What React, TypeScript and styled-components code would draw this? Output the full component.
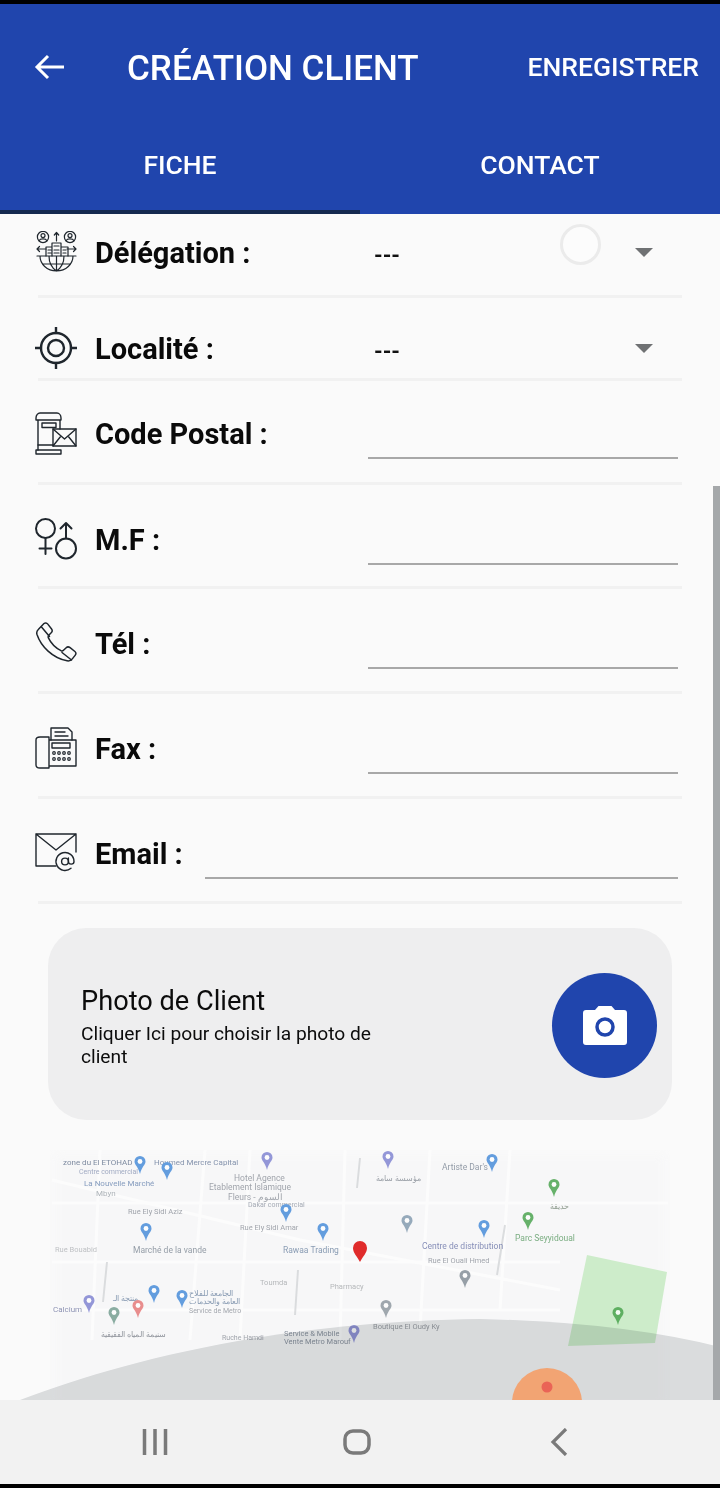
import React from "react";
import styled, { createGlobalStyle } from "styled-components";

const Global = createGlobalStyle`
  html, body { margin: 0; padding: 0; background: #fafafa; }
  body { font-family: Roboto, "Noto Sans", sans-serif; overflow: hidden; }
  #root { width: 720px; height: 1488px; }
`;

const Phone = styled.div`
  position: relative;
  width: 720px;
  height: 1488px;
  display: flex;
  flex-direction: column;
  background: #fafafa;
  overflow: hidden;
`;
const StatusStrip = styled.div`height: 4px; background: #000; flex: none;`;
const AppBar = styled.header`
  flex: none;
  height: 210px;
  background: #2045ad;
  color: #fff;
  display: flex;
  flex-direction: column;
`;
const Toolbar = styled.div`
  height: 126px;
  display: flex;
  align-items: center;
  padding: 0 21px 0 34px;
  box-sizing: border-box;
`;
const BackBtn = styled.div`width: 93px; display: flex; align-items: center;`;
const Title = styled.h1`
  margin: 0;
  padding-top: 3px;
  flex: 1;
  font: 500 35px/40px Roboto, sans-serif;
`;
const SaveBtn = styled.div`font: 500 26.5px/32px Roboto, sans-serif;`;
const Tabs = styled.div`flex: 1; display: flex;`;
const Tab = styled.div<{ $active?: boolean }>`
  flex: 1;
  display: flex;
  align-items: center;
  justify-content: center;
  padding-bottom: 10px;
  box-sizing: border-box;
  font: 500 26.5px/32px Roboto, sans-serif;
  border-bottom: 4px solid ${(p) => (p.$active ? "#14294f" : "transparent")};
`;
const Form = styled.main`flex: none; display: flex; flex-direction: column;`;
const Row = styled.div<{ $h: number; $top: number }>`
  position: relative;
  height: ${(p) => p.$h}px;
  padding: ${(p) => p.$top}px 42px 0 35px;
  box-sizing: border-box;
  display: flex;
  align-items: flex-start;
  &::after {
    content: "";
    position: absolute;
    left: 38px;
    right: 38px;
    bottom: 0;
    height: 3px;
    background: #f1f1f1;
  }
`;
const IconBox = styled.div`
  flex: none;
  width: 42px;
  height: 42px;
  margin-right: 18px;
  color: #1f262d;
`;
const Label = styled.div<{ $w?: number }>`
  flex: none;
  width: ${(p) => p.$w ?? 273}px;
  padding-top: 1px;
  font: 700 29px/42px Roboto, sans-serif;
  color: #0a0a0a;
`;
const Field = styled.div`
  flex: 1;
  height: 47px;
  box-sizing: border-box;
  border-bottom: 2px solid #a8a8a8;
`;
const Select = styled.div`
  flex: 1;
  display: flex;
  align-items: center;
  justify-content: space-between;
  padding: 4px 25px 0 6px;
  font: 700 22px/42px Roboto, sans-serif;
  color: #111;
`;
const Caret = styled.span`
  width: 0;
  height: 0;
  margin-top: -8px;
  border-left: 9px solid transparent;
  border-right: 9px solid transparent;
  border-top: 9px solid #6f7173;
`;
const Ripple = styled.span`
  position: absolute;
  left: 560px;
  top: 10px;
  width: 41px;
  height: 41px;
  box-sizing: border-box;
  border-radius: 50%;
  background: #fcfcfc;
  border: 3px solid #ebebeb;
`;
const Card = styled.section`
  flex: none;
  margin: 24px 48px 0;
  height: 192px;
  border-radius: 38px;
  background: #eeeeef;
  display: flex;
  align-items: center;
  justify-content: space-between;
  padding: 0 15px 0 33px;
`;
const CardText = styled.div`width: 310px; color: #0c0c0c;`;
const CardTitle = styled.div`font: 400 27.2px/41px Roboto, sans-serif;`;
const CardSub = styled.div`font: 400 19.2px/23px Roboto, sans-serif;`;
const CameraBtn = styled.div`
  width: 105px;
  height: 105px;
  margin-top: 2px;
  border-radius: 50%;
  background: #2045ad;
  display: flex;
  align-items: center;
  justify-content: center;
  color: #fff;
`;
const MapWrap = styled.div`
  flex: none;
  margin-top: 30px;
  height: 250px;
  overflow: hidden;
`;
const MapSvg = styled.svg`display: block; width: 720px; height: 250px;`;
const Soft = styled.g`filter: blur(4px);`;
const Haze = styled.g`filter: blur(0.5px); opacity: 0.8;`;
const Park = styled.path`filter: blur(0.6px);`;
const Shade = styled.path`mix-blend-mode: multiply;`;
const NavRow = styled.nav`
  flex: none;
  height: 84px;
  background: #f2f2f2;
  display: flex;
  align-items: center;
  padding-left: 141px;
  color: #7a7a7a;
`;
const NavSlot = styled.span<{ $w: number }>`
  display: flex;
  width: ${(p) => p.$w}px;
`;
const BottomStrip = styled.div`height: 4px; background: #000; flex: none;`;
const ScrollThumb = styled.div`
  position: absolute;
  right: 0;
  top: 486px;
  width: 7px;
  height: 914px;
  background: #a5a8aa;
`;

const stroke = { fill: "none", stroke: "currentColor", strokeWidth: 1.5, strokeLinecap: "round", strokeLinejoin: "round" } as const;

const DelegationIcon = () => (
  <svg width="42" height="42" viewBox="0 0 42 42" {...stroke} strokeWidth={1.2}>
    <circle cx="8" cy="6" r="5.6" /><circle cx="8" cy="4.6" r="2" /><path d="M4.200 9.600c1-2.400 6.600-2.400 7.600 0" />
    <circle cx="35" cy="6" r="5.600" /><circle cx="35" cy="4.600" r="2" /><path d="M31.200 9.600c1-2.400 6.600-2.400 7.600 0" />
    <path d="M21.500 10V1.500M19.300 4l2.200-2.500L23.700 4M2 18h9M2 18l2.500-2.500M2 18l2.500 2.500M41 18h-9M41 18l-2.500-2.500M41 18l-2.500 2.500" />
    <path d="M17 25V12h9v13M11 25V16h6M26 16h7v9M19 15h5M13 19h3M13 22h3M19 19h5M19 22h5M28 19h3M28 22h3" />
    <path d="M2 25h39M5 25c0 8 7 15 16.500 15S38 33 38 25M21.500 25v15M14 25c0 7 3 12 7.500 15M29 25c0 7-3 12-7.500 15M8 33h27" />
  </svg>
);
const TargetIcon = () => (
  <svg width="42" height="42" viewBox="0 0 42 42" {...stroke} strokeWidth={2.4}>
    <circle cx="21" cy="21" r="15" /><circle cx="21" cy="21" r="8" />
    <path d="M21 0v6M21 36v6M0 21h6M36 21h6" />
  </svg>
);
const PostIcon = () => (
  <svg width="42" height="44" viewBox="0 0 42 44" {...stroke} strokeWidth={1.4}>
    <path d="M1 6c0-3 2-5 4-5h17c2 0 4 2 4 5v2H1zM3 8v30M25 8v9" />
    <rect x="7" y="11" width="14" height="4.500" />
    <rect x="18" y="17" width="23" height="17" />
    <path d="M18 17l11.500 10L41 17M18 34l8-10M41 34l-8-10M3 33h15" />
    <path d="M1 38h25v4H1z" />
  </svg>
);
const GenderIcon = () => (
  <svg width="42" height="42" viewBox="0 0 42 42" {...stroke} strokeWidth={2}>
    <circle cx="10.500" cy="10.500" r="9.500" /><path d="M10.500 20v16M4.500 30.500h12" />
    <circle cx="31" cy="30.500" r="10" /><path d="M31 20.500V5M25.500 10.500L31 5l5.500 5.500" />
  </svg>
);
const PhoneIcon = () => (
  <svg width="42" height="42" viewBox="0 0 42 42" {...stroke} strokeWidth={1.5}>
    <path d="M9 1.500c1.200-1 2.700-.7 3.600.4l3.800 4.800c1 1.300 1 2.800 0 3.900l-2.600 2.700c-.7.8-.8 1.700-.4 2.600 2.700 5.600 7 10 12.600 12.800.9.4 1.800.3 2.500-.4l2.700-2.600c1.100-1 2.600-1 3.900 0l4.800 3.800c1.100.9 1.400 2.400.4 3.600l-3 3.800c-1.300 1.600-3.200 2.300-5.200 1.900C17.500 36 6 24.500 2 12.500c-.6-2-.1-3.900 1.500-5.300z" />
    <path d="M6.500 5l8 9.500M27 30.500l9.500 7.500" />
  </svg>
);
const FaxIcon = () => (
  <svg width="42" height="42" viewBox="0 0 42 42" {...stroke} strokeWidth={1.4}>
    <path d="M5 10h9v31H5c-2 0-4-1-4-3V13c0-2 2-3 4-3zM14 13h27v26H14" />
    <path d="M16 13V1h17l4 4v8M20 5h10M20 9h13" />
    <rect x="17" y="16" width="18" height="5" />
    <g strokeWidth={1.2}>
      <circle cx="19" cy="26" r="1.300" /><circle cx="24" cy="26" r="1.300" /><circle cx="29" cy="26" r="1.300" /><circle cx="34" cy="26" r="1.300" />
      <circle cx="19" cy="32" r="1.300" /><circle cx="24" cy="32" r="1.300" /><circle cx="29" cy="32" r="1.300" /><circle cx="34" cy="32" r="1.300" />
    </g>
  </svg>
);
const MailIcon = () => (
  <svg width="42" height="40" viewBox="0 0 42 40" {...stroke} strokeWidth={1.4}>
    <path d="M21 34H1V2h40v18M1 2l20 16L41 2" />
    <circle cx="30" cy="29.500" r="3.400" />
    <path d="M36 36.200A9 9 0 1 1 39 29.500c0 3.500-5.600 3.500-5.600 0V26" />
  </svg>
);

type PinData = [number, number, string];
const pins: PinData[] = [
  [140, 1168, "#3f87d8"], [167, 1174, "#3f87d8"], [267, 1164, "#7b7fd0"], [388, 1163, "#7b7fd0"], [492, 1166, "#3f87d8"],
  [554, 1191, "#43a047"], [528, 1224, "#43a047"], [286, 1216, "#3f87d8"], [323, 1235, "#3f87d8"], [146, 1235, "#3f87d8"],
  [407, 1227, "#7f97ad"], [484, 1232, "#3f87d8"], [465, 1282, "#7f8a94"], [386, 1312, "#8a949c"], [618, 1319, "#43a047"],
  [154, 1297, "#3f87d8"], [182, 1302, "#3f87d8"], [89, 1307, "#7b7fd0"], [114, 1319, "#6f9a8c"], [138, 1312, "#e57373"],
  [354, 1337, "#7b7fd0"],
];
type TextData = [number, number, string, string, number?];
const labels: TextData[] = [
  [63, 1165, "zone du El ETOHAD", "#5f6f8a", 8], [79, 1174, "Centre commercial", "#8b97b5", 7],
  [84, 1186, "La Nouvelle Marché", "#6a86b0", 8], [96, 1196, "Mbyn", "#9aa1a8", 8],
  [154, 1165, "Houmed Mercre Capital", "#687a9a", 8], [234, 1181, "Hotel Agence", "#8a8f98"],
  [209, 1190, "Etablement Islamique", "#8a8f98"], [228, 1200, "Fleurs - السوم", "#8a8f98"],
  [248, 1207, "Dakar commercial", "#8f96a3", 7], [128, 1214, "Rue Ely Sidi Aziz", "#8a8f98", 7.5],
  [240, 1230, "Rue Ely Sidi Amar", "#8a8f98", 7.5], [133, 1253, "Marché de la vande", "#7c8793"],
  [283, 1253, "Rawaa Trading", "#6f86a3"], [55, 1252, "Rue Bouabid", "#b0b3b7", 7.5],
  [422, 1249, "Centre de distribution", "#6a74a8"], [428, 1263, "Rue El Ouali Hmed", "#8a8f98", 7.5],
  [442, 1170, "Artiste Dar's", "#7a8594"], [376, 1181, "مؤسسة سامة", "#848b94", 7.5],
  [515, 1241, "Parc Seyyidoual", "#5a9a63"], [550, 1209, "حديقة", "#7a8a7a", 7.5],
  [53, 1312, "Calcium", "#7077a0", 8], [113, 1301, "منتجة الـ", "#6f86a3", 8], [189, 1296, "الجامعة للفلاح", "#6f86a3", 8],
  [189, 1304, "العامة والحدمات", "#6f86a3", 8], [189, 1313, "Service de Metro", "#8a8f98", 7],
  [101, 1337, "سنيمة المياه الفقيقية", "#7a7f88", 8], [373, 1329, "Boutique El Oudy Ky", "#858a90", 7.5],
  [284, 1336, "Service & Mobile", "#6f7a88", 7.5], [284, 1344, "Vente Metro Marouf", "#6f7a88", 7.5],
  [222, 1340, "Ruche Hamdi", "#8a8f98", 7], [260, 1285, "Toumda", "#a5a8ab", 7.5], [330, 1289, "Pharmacy", "#a5a8ab", 7.5],
];
const roads = [
  "M52 1203H668", "M52 1262H560", "M52 1310H560", "M100 1150L92 1340", "M205 1150L190 1340", "M345 1150L340 1340",
  "M430 1150L420 1330", "M510 1150L500 1310", "M52 1180L300 1240L560 1290", "M250 1150L240 1340",
];
const MapPin = ({ x, y, c }: { x: number; y: number; c: string }) => (
  <g transform={`translate(${x} ${y})`}>
    <path d="M0 6C-2-2-5.500-3-5.500-6.500a5.500 5.500 0 0 1 11 0C5.500-3 2-2 0 6z" fill={c} />
    <circle cx="0" cy="-6.500" r="2.400" fill="#fff" />
  </g>
);

const CameraGlyph = () => (
  <svg width="44" height="40" viewBox="0 0 44 40">
    <path fill="currentColor" d="M3 5h9l3.500-4h13L32 5h9a3 3 0 0 1 3 3v29a3 3 0 0 1-3 3H3a3 3 0 0 1-3-3V8a3 3 0 0 1 3-3z" />
    <circle cx="22" cy="22" r="8" fill="none" stroke="#2045ad" strokeWidth="3.500" />
  </svg>
);

const MapView = () => (
  <MapSvg viewBox="0 1150 720 250">
    <Soft><rect x="56" y="1155" width="608" height="250" fill="#f7f7f8" /></Soft>
    <g fill="none" stroke="#fcfcfc" strokeWidth="3">{roads.map((d) => <path key={d} d={d} />)}</g>
    <Park d="M587 1255L667 1272L655 1343L568 1346Z" fill="#cdecca" />
    <Haze>
      <path d="M360 1158l-3 30M107 1262l-4 40M298 1270l-3 45M505 1225l-8 50" stroke="#d4d6d8" strokeWidth="2" fill="none" />
      {labels.map(([x, y, t, c, s]) => (
        <text key={t} x={x} y={y} fill={c} fontSize={s ?? 8.5} fontFamily="Roboto, 'Noto Sans', sans-serif">{t}</text>
      ))}
      {pins.map(([x, y, c]) => <MapPin key={`${x}-${y}`} x={x} y={y} c={c} />)}
    </Haze>
    <path d="M360 1262c-3-6-7-9-7-14a7 7 0 0 1 14 0c0 5-4 8-7 14z" fill="#e02b2b" />
    <Shade d="M20 1400C120 1362 270 1322 480 1319Q620 1322 720 1347V1400Z" fill="#dfe1e2" />
    <circle cx="547" cy="1403" r="35" fill="#f2a473" />
    <circle cx="547" cy="1387" r="5.500" fill="#ea6456" />
  </MapSvg>
);

const rows = [
  { h: 84, top: 17, label: "Délégation :", icon: <DelegationIcon />, kind: "select", ripple: true },
  { h: 83, top: 29, label: "Localité :", icon: <TargetIcon />, kind: "select" },
  { h: 104, top: 31, label: "Code Postal :", icon: <PostIcon />, kind: "field" },
  { h: 104, top: 33, label: "M.F :", icon: <GenderIcon />, kind: "field" },
  { h: 105, top: 33, label: "Tél :", icon: <PhoneIcon />, kind: "field" },
  { h: 105, top: 33, label: "Fax :", icon: <FaxIcon />, kind: "field" },
  { h: 105, top: 33, label: "Email :", icon: <MailIcon />, kind: "field", w: 110 },
];

export default function App() {
  return (
    <Phone>
      <Global />
      <StatusStrip />
      <AppBar>
        <Toolbar>
          <BackBtn>
            <svg width="30" height="26" viewBox="0 0 30 26" fill="none" stroke="#fff" strokeWidth="3">
              <path d="M30 13H3M14 2L3 13l11 11" />
            </svg>
          </BackBtn>
          <Title>CRÉATION CLIENT</Title>
          <SaveBtn>ENREGISTRER</SaveBtn>
        </Toolbar>
        <Tabs>
          <Tab $active>FICHE</Tab>
          <Tab>CONTACT</Tab>
        </Tabs>
      </AppBar>
      <Form>
        {rows.map((r) => (
          <Row key={r.label} $h={r.h} $top={r.top}>
            <IconBox>{r.icon}</IconBox>
            <Label $w={r.w}>{r.label}</Label>
            {r.kind === "select" ? (
              <Select>---<Caret /></Select>
            ) : (
              <Field />
            )}
            {r.ripple && <Ripple />}
          </Row>
        ))}
        <Card>
          <CardText>
            <CardTitle>Photo de Client</CardTitle>
            <CardSub>Cliquer Ici pour choisir la photo de client</CardSub>
          </CardText>
          <CameraBtn><CameraGlyph /></CameraBtn>
        </Card>
        <MapWrap><MapView /></MapWrap>
      </Form>
      <NavRow>
        <NavSlot $w={202}>
          <svg width="28" height="26" viewBox="0 0 28 26" fill="none" stroke="currentColor" strokeWidth="3.500"><path d="M3.500 0v26M14 0v26M24.500 0v26" /></svg>
        </NavSlot>
        <NavSlot $w={207}>
          <svg width="28" height="26" viewBox="0 0 28 26" fill="none" stroke="currentColor" strokeWidth="3.500"><rect x="2" y="2" width="24" height="22" rx="8" /></svg>
        </NavSlot>
        <NavSlot $w={20}>
          <svg width="18" height="28" viewBox="0 0 18 28" fill="none" stroke="currentColor" strokeWidth="3.200"><path d="M16 1L3 14l13 13" /></svg>
        </NavSlot>
      </NavRow>
      <BottomStrip />
      <ScrollThumb />
    </Phone>
  );
}
